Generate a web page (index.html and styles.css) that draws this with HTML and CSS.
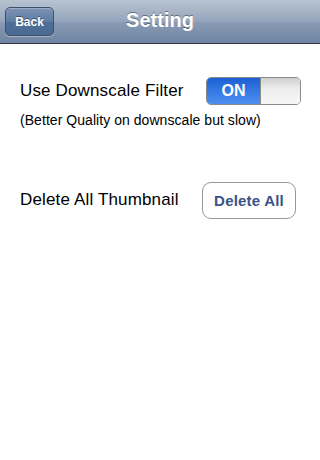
FILE: index.html
```html
<!DOCTYPE html>
<html>
<head>
<meta charset="utf-8">
<link rel="stylesheet" href="styles.css">
</head>
<body>
<div class="navbar">
  <div class="back">Back</div>
  <div class="title">Setting</div>
</div>
<div class="content">
  <div class="row row-filter">
    <div class="label label-filter">Use Downscale Filter</div>
    <div class="switch"><div class="on">ON</div><div class="knob"></div></div>
  </div>
  <div class="note">(Better Quality on downscale but slow)</div>
  <div class="row row-delete">
    <div class="label label-delete">Delete All Thumbnail</div>
    <div class="btn">Delete All</div>
  </div>
</div>
</body>
</html>
```
FILE: styles.css
```css
html, body {
  margin: 0;
  padding: 0;
  background: #fff;
  width: 320px;
  height: 460px;
  overflow: hidden;
  font-family: "Liberation Sans", Arial, sans-serif;
}
.navbar {
  height: 43px;
  border-bottom: 1px solid #2d3642;
  background: linear-gradient(to bottom, #b8c3d2 0%, #94a5bb 50%, #8a9cb4 51%, #6e84a2 100%);
  display: flex;
  align-items: center;
  justify-content: center;
  position: relative;
}
.back {
  position: absolute;
  left: 5px;
  top: 7px;
  width: 47px;
  height: 27px;
  border: 1px solid #3e4f68;
  border-radius: 5px;
  background: linear-gradient(to bottom, #7d93b3 0%, #5f7ca3 50%, #4f6e98 51%, #4a6a94 100%);
  box-shadow: 0 1px 0 rgba(255,255,255,0.35), inset 0 1px 0 rgba(255,255,255,0.25);
  color: #fff;
  font-weight: bold;
  font-size: 12px;
  display: flex;
  align-items: center;
  justify-content: center;
  text-shadow: 0 -1px 0 rgba(0,0,0,0.4);
}
.title {
  color: #fff;
  font-weight: bold;
  font-size: 20px;
  text-shadow: 0 -1px 0 rgba(0,0,0,0.4);
  margin-top: -2px;
}
.content {
  padding: 0 0 0 20px;
}
.row {
  display: flex;
  align-items: center;
}
.row-filter {
  margin-top: 33px;
  height: 28px;
}
.label {
  font-size: 17px;
  letter-spacing: 0.15px;
  color: #000;
}
.label-filter {
  width: 186px;
}
.label-delete {
  width: 182px;
}
.switch {
  width: 93px;
  height: 26px;
  border: 1px solid #8a8a8a;
  border-radius: 5px;
  overflow: hidden;
  display: flex;
}
.on {
  width: 53px;
  background: linear-gradient(to bottom, #1c5fd4 0%, #3479e4 50%, #4f8ef0 100%);
  color: #fff;
  font-weight: bold;
  font-size: 16px;
  display: flex;
  align-items: center;
  justify-content: center;
  border-right: 1px solid #8a8a8a;
}
.knob {
  flex: 1;
  background: linear-gradient(to bottom, #cfcfcf 0%, #ececec 40%, #f7f7f7 100%);
}
.note {
  font-size: 14px;
  letter-spacing: 0.05px;
  color: #000;
  margin-top: 7px;
}
.row-delete {
  margin-top: 54px;
  height: 36px;
}
.btn {
  width: 92px;
  height: 35px;
  border: 1px solid #9a9a9a;
  border-radius: 9px;
  background: #fff;
  color: #385487;
  font-weight: bold;
  font-size: 15px;
  letter-spacing: 0.2px;
  display: flex;
  align-items: center;
  justify-content: center;
}
```
